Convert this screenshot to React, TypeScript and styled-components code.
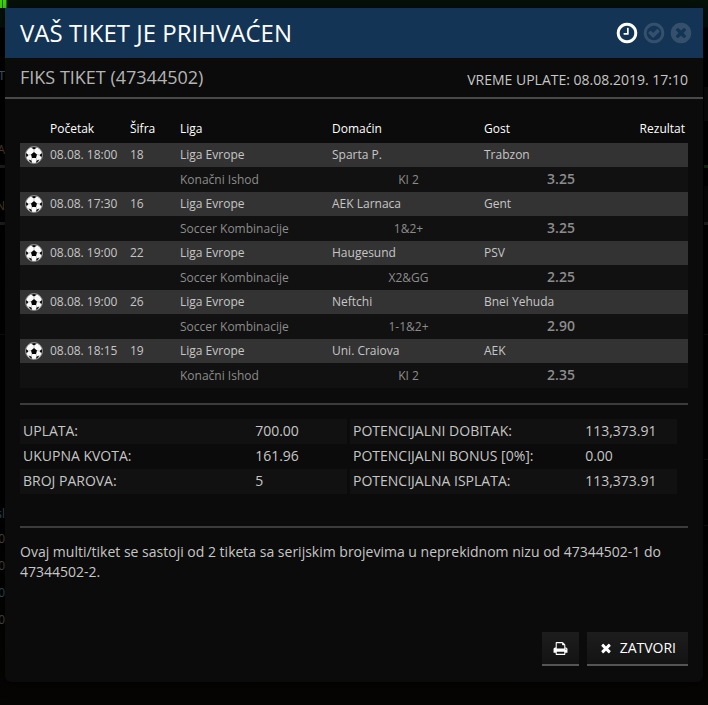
import React from "react";
import styled, { createGlobalStyle } from "styled-components";

const GlobalStyle = createGlobalStyle`
  * { box-sizing: border-box; }
  body {
    margin: 0;
    background: #030302;
    color: #c6c6c6;
    font-family: "Open Sans", "Noto Sans", sans-serif;
    font-size: 14px;
    line-height: 20px;
    overflow-x: hidden;
  }
`;

const Page = styled.div`
  position: relative;
  min-height: 100vh;
  padding: 8px 5px 0;
  overflow: hidden;
  background: linear-gradient(#06110a 0, #06110a 27px, #010101 28px, #020202 75%, #060503 100%);
`;

/* Dimmed page that stays visible around the dialog. */
const Behind = styled.div<{ $side: "left" | "right" }>`
  position: absolute;
  top: 0;
  bottom: 0;
  ${(p) => p.$side}: 0;
  width: ${(p) => (p.$side === "left" ? 7 : 4)}px;
  overflow: hidden;
`;

const Meter = styled.div`
  height: 8px;
  background: linear-gradient(90deg, #43d40a 0 2px, #1f6d08 2px 3px, #43d40a 3px 6px, #1f6d08 6px);
`;

const Strip = styled.div<{ $gap: number; $size: number; $color: string }>`
  margin-top: ${(p) => p.$gap}px;
  height: ${(p) => p.$size}px;
  background: ${(p) => p.$color};
`;

const Clipped = styled.div<{ $gap: number; $color: string }>`
  margin-top: ${(p) => p.$gap}px;
  display: flex;
  justify-content: flex-end;
  width: 5px;
  height: 16px;
  line-height: 16px;
  font-size: 12px;
  white-space: nowrap;
  color: ${(p) => p.$color};
`;

const Dialog = styled.section`
  position: relative;
  background: #0b0b0b;
  border-radius: 0 0 6px 6px;
  box-shadow: 0 2px 14px rgba(0, 0, 0, 0.7);
  overflow: hidden;
`;

const TitleBar = styled.header`
  display: flex;
  align-items: center;
  justify-content: space-between;
  height: 50px;
  padding: 0 10px 0 15px;
  background: #143456;
`;

const Title = styled.h1`
  margin: 0;
  font-size: 24px;
  line-height: 32px;
  font-weight: 400;
  color: #fff;
`;

const StatusList = styled.div`
  display: flex;
  gap: 3px;
`;

const Glyph = styled.svg<{ $size: number; $faded?: boolean }>`
  display: block;
  width: ${(p) => p.$size}px;
  height: ${(p) => p.$size}px;
  fill: ${(p) => (p.$faded ? "#34506d" : "#fff")};
`;

const TicketBar = styled.div`
  display: flex;
  align-items: center;
  justify-content: space-between;
  height: 41px;
  padding: 0 15px;
  border-bottom: 2px solid #494949;
`;

const TicketName = styled.h2`
  margin: 0;
  padding-bottom: 2px;
  font-size: 18px;
  line-height: 24px;
  font-weight: 400;
  color: #b4b4b4;
`;

const PaidAt = styled.span`
  padding-top: 4px;
`;

const Body = styled.div`
  padding: 15px 15px 16px;
`;

const Bets = styled.table`
  width: 100%;
  table-layout: fixed;
  border-collapse: collapse;
  font-size: 12px;
  line-height: 16px;

  th, td { padding: 0 0 0 2px; text-align: left; white-space: nowrap; }
  th { height: 29px; font-weight: 400; color: #fff; }
`;

const Col = styled.col<{ $width?: number }>`
  width: ${(p) => (p.$width ? `${p.$width}px` : "auto")};
`;

const RightHead = styled.th`
  && { padding: 0 3px 0 0; text-align: right; }
`;

const MatchRow = styled.tr`
  height: 24px;
  background: #333;
`;

const PickRow = styled.tr`
  height: 25px;
  background: #111;
  color: #8c8c8c;
`;

const BallCell = styled.td`
  && { padding: 0 0 0 5px; }
`;

const Ball = styled.svg`
  display: block;
  width: 18px;
  height: 18px;
`;

const PickCell = styled.td`
  && { padding-left: 5px; text-align: center; }
`;

const OddsCell = styled.td`
  && { padding: 0 0 2px 2px; text-align: center; }
  font-size: 14px;
  font-weight: 600;
`;

const Rule = styled.hr<{ $top: number; $bottom: number }>`
  margin: ${(p) => p.$top}px 0 ${(p) => p.$bottom}px;
  border: 0;
  height: 2px;
  background: #3b3b3b;
`;

const Totals = styled.div`
  display: grid;
  grid-template-columns: 1fr 1fr;
  gap: 3px;
  padding-right: 11px;
`;

const TotalsTable = styled.table`
  width: 100%;
  table-layout: fixed;
  border-collapse: collapse;

  tr { height: 25px; }
  tr:nth-child(odd) { background: #111; }
  th, td { padding: 0 0 2px 3px; text-align: left; font-weight: 400; white-space: nowrap; }
  th { width: 71%; }
`;

const Note = styled.p`
  margin: 0;
`;

const Actions = styled.footer`
  display: flex;
  justify-content: flex-end;
  gap: 8px;
  margin-top: 50px;
`;

const Button = styled.button`
  display: flex;
  align-items: center;
  gap: 7px;
  height: 34px;
  padding: 0 12px;
  border: 0;
  border-bottom: 2px solid #555;
  background: linear-gradient(#1d1d1d, #131313);
  color: #fff;
  font: inherit;
  cursor: pointer;
`;

const IconButton = styled(Button)`
  padding: 0 11px;
`;

const RING =
  "M1440 896q0-148-73-273t-198-198-273-73-273 73-198 198-73 273 73 273 198 198 273 73 273-73 198-198 73-273zm224 0q0 209-103 385.5t-279.5 279.5-385.5 103-385.5-103-279.5-279.5-103-385.5 103-385.5 279.5-279.5 385.5-103 385.5 103 279.5 279.5 103 385.5z";

const ICONS = {
  clock: `M1024 544v448q0 14-9 23t-23 9h-320q-14 0-23-9t-9-23v-64q0-14 9-23t23-9h224v-352q0-14 9-23t23-9h64q14 0 23 9t9 23z${RING}`,
  check: `M1299 813l-422 422q-19 19-45 19t-45-19l-294-294q-19-19-19-45t19-45l102-102q19-19 45-19t45 19l147 147 275-275q19-19 45-19t45 19l102 102q19 19 19 45t-19 45z${RING}`,
  cancel:
    "M1277 1122q0-26-19-45l-181-181 181-181q19-19 19-45 0-27-19-46l-90-90q-19-19-46-19-26 0-45 19l-181 181-181-181q-19-19-45-19-27 0-46 19l-90 90q-19 19-19 46 0 26 19 45l181 181-181 181q-19 19-19 45 0 27 19 46l90 90q19 19 46 19 26 0 45-19l181-181 181 181q19 19 45 19 27 0 46-19l90-90q19-19 19-46zm387-226q0 209-103 385.5t-279.5 279.5-385.5 103-385.5-103-279.5-279.5-103-385.5 103-385.5 279.5-279.5 385.5-103 385.5 103 279.5 279.5 103 385.5z",
  times:
    "M1490 1322q0 40-28 68l-136 136q-28 28-68 28t-68-28l-294-294-294 294q-28 28-68 28t-68-28l-136-136q-28-28-28-68t28-68l294-294-294-294q-28-28-28-68t28-68l136-136q28-28 68-28t68 28l294 294 294-294q28-28 68-28t68 28l136 136q28 28 28 68t-28 68l-294 294 294 294q28 28 28 68z",
  print:
    "M448 1536h896v-256h-896v256zm0-640h896v-384h-160q-40 0-68-28t-28-68v-160h-640v640zm1152 64q0-26-19-45t-45-19-45 19-19 45 19 45 45 19 45-19 19-45zm128 0v416q0 13-9.5 22.5t-22.5 9.5h-224v160q0 40-28 68t-68 28h-960q-40 0-68-28t-28-68v-160h-224q-13 0-22.5-9.5t-9.5-22.5v-416q0-79 56.5-135.5t135.5-56.5h64v-544q0-40 28-68t68-28h672q40 0 88 20t76 48l152 152q28 28 48 76t20 88v256h64q79 0 135.5 56.5t56.5 135.5z",
};

interface IconProps {
  name: keyof typeof ICONS;
  size: number;
  faded?: boolean;
}

const Icon = ({ name, size, faded }: IconProps) => (
  <Glyph viewBox="0 0 1792 1792" $size={size} $faded={faded} aria-hidden="true">
    <path d={ICONS[name]} />
  </Glyph>
);

const SoccerBall = () => (
  <Ball viewBox="0 0 36 36" role="img" aria-label="Fudbal">
    <circle cx="18" cy="18" r="17" fill="#fafafa" />
    <g fill="#050505">
      <path d="M18 12l6 5-2 7h-8l-2-7z" />
      <path d="M12 3q6-2 12 0l-6 4z" />
      <path d="M2 14q-1 4 1 9l4-5z" />
      <path d="M34 14q1 4-1 9l-4-5z" />
      <path d="M7 27l6 2 1 5q-4-2-7-7z" />
      <path d="M29 27l-6 2-1 5q4-2 7-7z" />
    </g>
    <path
      d="M18 12V7M24 17l5 1M22 24l2 5M14 24l-2 5M12 17l-5 1"
      stroke="#999"
      strokeWidth="1"
      fill="none"
    />
    <circle cx="18" cy="18" r="17" fill="none" stroke="#808080" strokeWidth="2" />
  </Ball>
);

const bets = [
  { start: "08.08. 18:00", code: "18", home: "Sparta P.", away: "Trabzon", market: "Konačni Ishod", pick: "KI 2", odds: "3.25" },
  { start: "08.08. 17:30", code: "16", home: "AEK Larnaca", away: "Gent", market: "Soccer Kombinacije", pick: "1&2+", odds: "3.25" },
  { start: "08.08. 19:00", code: "22", home: "Haugesund", away: "PSV", market: "Soccer Kombinacije", pick: "X2&GG", odds: "2.25" },
  { start: "08.08. 19:00", code: "26", home: "Neftchi", away: "Bnei Yehuda", market: "Soccer Kombinacije", pick: "1-1&2+", odds: "2.90" },
  { start: "08.08. 18:15", code: "19", home: "Uni. Craiova", away: "AEK", market: "Konačni Ishod", pick: "KI 2", odds: "2.35" },
];

const totals = [
  [
    ["UPLATA:", "700.00"],
    ["UKUPNA KVOTA:", "161.96"],
    ["BROJ PAROVA:", "5"],
  ],
  [
    ["POTENCIJALNI DOBITAK:", "113,373.91"],
    ["POTENCIJALNI BONUS [0%]:", "0.00"],
    ["POTENCIJALNA ISPLATA:", "113,373.91"],
  ],
];

export default function App() {
  return (
    <>
      <GlobalStyle />
      <Page>
        <Behind $side="left" aria-hidden="true">
          <Meter />
          <Clipped $gap={60} $color="#3d6f80">T</Clipped>
          <Clipped $gap={58} $color="#5c4636">A</Clipped>
          <Strip $gap={7} $size={3} $color="#222" />
          <Clipped $gap={30} $color="#5c4a33">N</Clipped>
          <Strip $gap={8} $size={3} $color="#222" />
          <Strip $gap={109} $size={1} $color="#111" />
          <Clipped $gap={171} $color="#3a5a6c">sl</Clipped>
          <Clipped $gap={9} $color="#555">0</Clipped>
          <Clipped $gap={11} $color="#555">0</Clipped>
          <Clipped $gap={11} $color="#3a5a6c">00</Clipped>
          <Clipped $gap={11} $color="#555">50</Clipped>
        </Behind>
        <Behind $side="right" aria-hidden="true">
          <Strip $gap={87} $size={34} $color="#0b0b0b" />
          <Strip $gap={44} $size={3} $color="#12300c" />
          <Strip $gap={18} $size={36} $color="#080808" />
          <Strip $gap={0} $size={3} $color="#222" />
          <Strip $gap={109} $size={1} $color="#111" />
          <Strip $gap={124} $size={1} $color="#111" />
          <Strip $gap={65} $size={1} $color="#111" />
        </Behind>

        <Dialog role="dialog" aria-labelledby="dialog-title">
          <TitleBar>
            <Title id="dialog-title">VAŠ TIKET JE PRIHVAĆEN</Title>
            <StatusList>
              <Icon name="clock" size={24} />
              <Icon name="check" size={24} faded />
              <Icon name="cancel" size={24} faded />
            </StatusList>
          </TitleBar>
          <TicketBar>
            <TicketName>FIKS TIKET (47344502)</TicketName>
            <PaidAt>VREME UPLATE: 08.08.2019. 17:10</PaidAt>
          </TicketBar>
          <Body>
            <Bets>
              <colgroup>
                <Col $width={28} />
                <Col $width={80} />
                <Col $width={50} />
                <Col $width={152} />
                <Col $width={152} />
                <Col $width={156} />
                <Col />
              </colgroup>
              <thead>
                <tr>
                  <td />
                  <th scope="col">Početak</th>
                  <th scope="col">Šifra</th>
                  <th scope="col">Liga</th>
                  <th scope="col">Domaćin</th>
                  <th scope="col">Gost</th>
                  <RightHead scope="col">Rezultat</RightHead>
                </tr>
              </thead>
              <tbody>
                {bets.map((bet) => (
                  <React.Fragment key={bet.code}>
                    <MatchRow>
                      <BallCell>
                        <SoccerBall />
                      </BallCell>
                      <td>{bet.start}</td>
                      <td>{bet.code}</td>
                      <td>Liga Evrope</td>
                      <td>{bet.home}</td>
                      <td>{bet.away}</td>
                      <td />
                    </MatchRow>
                    <PickRow>
                      <td colSpan={3} />
                      <td>{bet.market}</td>
                      <PickCell>{bet.pick}</PickCell>
                      <OddsCell>{bet.odds}</OddsCell>
                      <td />
                    </PickRow>
                  </React.Fragment>
                ))}
              </tbody>
            </Bets>
            <Rule $top={15} $bottom={14} />
            <Totals>
              {totals.map((rows) => (
                <TotalsTable key={rows[0][0]}>
                  <tbody>
                    {rows.map(([label, value]) => (
                      <tr key={label}>
                        <th scope="row">{label}</th>
                        <td>{value}</td>
                      </tr>
                    ))}
                  </tbody>
                </TotalsTable>
              ))}
            </Totals>
            <Rule $top={32} $bottom={14} />
            <Note>
              Ovaj multi/tiket se sastoji od 2 tiketa sa serijskim brojevima u neprekidnom nizu od 47344502-1 do
              47344502-2.
            </Note>
            <Actions>
              <IconButton type="button" aria-label="Štampaj">
                <Icon name="print" size={15} />
              </IconButton>
              <Button type="button">
                <Icon name="times" size={14} />
                ZATVORI
              </Button>
            </Actions>
          </Body>
        </Dialog>
      </Page>
    </>
  );
}
